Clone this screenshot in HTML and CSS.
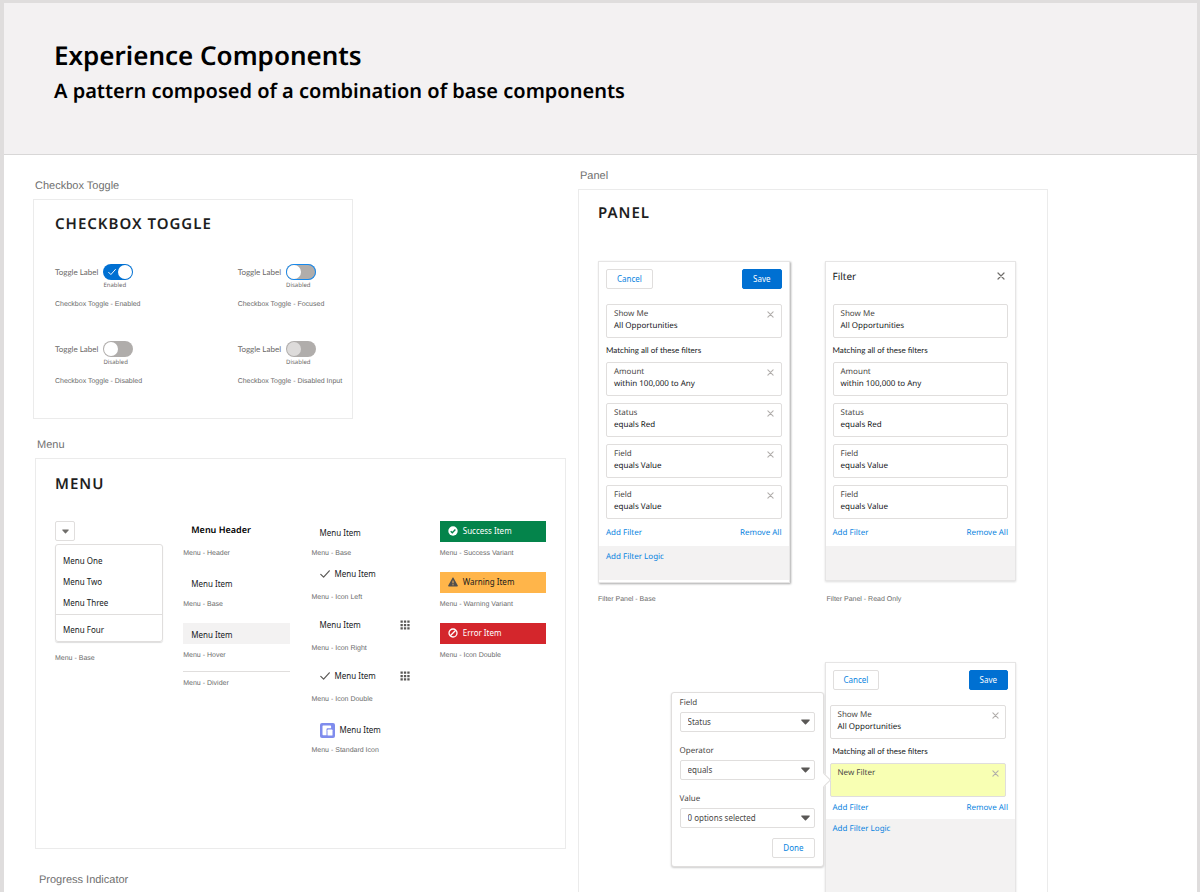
FILE: index.html
```html
<!DOCTYPE html>
<html lang="en">
<head>
<meta charset="utf-8">
<meta name="viewport" content="width=device-width, initial-scale=1">
<title>Experience Components</title>
<link rel="stylesheet" href="styles.css">
</head>
<body>
<svg class="sprite" aria-hidden="true">
  <symbol id="i-check" viewBox="0 0 10 10"><path d="M.8 5.4 3.6 8.2 9.3 1.8" fill="none" stroke="currentColor" stroke-width="1.2" stroke-linecap="round" stroke-linejoin="round"/></symbol>
  <symbol id="i-close" viewBox="0 0 8 8"><path d="M1 1 7 7M7 1 1 7" fill="none" stroke="currentColor" stroke-width="1.2" stroke-linecap="round"/></symbol>
  <symbol id="i-down" viewBox="0 0 10 6"><path d="M.9.3h8.2c.6 0 .8.5.5.9L5.6 5.5c-.3.4-.9.4-1.2 0L.4 1.2C.1.8.3.3.9.3z" fill="currentColor"/></symbol>
  <symbol id="i-apps" viewBox="0 0 10 10"><path d="M.5.5h2.300v2.300H.5zM3.900.5h2.300v2.300H3.900zM7.300.5h2.300v2.300H7.300zM.5 3.900h2.300v2.300H.5zM3.900 3.900h2.300v2.300H3.900zM7.300 3.900h2.300v2.300H7.300zM.5 7.300h2.300v2.300H.5zM3.900 7.300h2.300v2.300H3.900zM7.300 7.300h2.300v2.300H7.300z" fill="currentColor"/></symbol>
</svg>
<div class="page">
  <header class="hero">
    <h1 class="hero-title">Experience Components</h1>
    <p class="hero-text">A pattern composed of a combination of base components</p>
  </header>
  <main class="board">
    <div class="column">
      <section class="section section-toggle">
        <p class="section-label">Checkbox Toggle</p>
        <div class="card">
          <h2 class="card-title">Checkbox Toggle</h2>
          <div class="toggles">
            <div>
              <label class="toggle"><span class="toggle-label">Toggle Label</span><span class="switch"><input class="switch-input" type="checkbox" checked><svg class="switch-check"><use href="#i-check"/></svg></span><span class="toggle-state">Enabled</span></label>
              <p class="caption">Checkbox Toggle - Enabled</p>
            </div>
            <div>
              <label class="toggle"><span class="toggle-label">Toggle Label</span><span class="switch"><input class="switch-input is-focused" type="checkbox"></span><span class="toggle-state">Disabled</span></label>
              <p class="caption">Checkbox Toggle - Focused</p>
            </div>
            <div>
              <label class="toggle"><span class="toggle-label">Toggle Label</span><span class="switch"><input class="switch-input" type="checkbox"></span><span class="toggle-state">Disabled</span></label>
              <p class="caption">Checkbox Toggle - Disabled</p>
            </div>
            <div>
              <label class="toggle"><span class="toggle-label">Toggle Label</span><span class="switch"><input class="switch-input" type="checkbox" disabled></span><span class="toggle-state">Disabled</span></label>
              <p class="caption">Checkbox Toggle - Disabled Input</p>
            </div>
          </div>
        </div>
      </section>

      <section class="section section-menu">
        <p class="section-label">Menu</p>
        <div class="card">
          <h2 class="card-title">Menu</h2>
          <div class="menus">
            <div>
              <button class="menu-trigger" type="button" aria-label="Open menu"><svg class="icon-down-small"><use href="#i-down"/></svg></button>
              <ul class="menu">
                <li><button class="menu-option" type="button">Menu One</button></li>
                <li><button class="menu-option" type="button">Menu Two</button></li>
                <li><button class="menu-option" type="button">Menu Three</button></li>
                <li class="menu-last"><button class="menu-option" type="button">Menu Four</button></li>
              </ul>
              <p class="caption">Menu - Base</p>
            </div>
            <div>
              <h3 class="item item-header">Menu Header</h3>
              <p class="caption">Menu - Header</p>
              <button class="item" type="button">Menu Item</button>
              <p class="caption">Menu - Base</p>
              <button class="item item-hover" type="button">Menu Item</button>
              <p class="caption caption-tight">Menu - Hover</p>
              <hr class="divider">
              <p class="caption">Menu - Divider</p>
            </div>
            <div>
              <button class="item" type="button">Menu Item</button>
              <p class="caption caption-tight">Menu - Base</p>
              <button class="item item-check" type="button"><svg class="icon"><use href="#i-check"/></svg>Menu Item</button>
              <p class="caption">Menu - Icon Left</p>
              <button class="item item-check" type="button">Menu Item<svg class="icon icon-end"><use href="#i-apps"/></svg></button>
              <p class="caption">Menu - Icon Right</p>
              <button class="item item-check" type="button"><svg class="icon"><use href="#i-check"/></svg>Menu Item<svg class="icon icon-end"><use href="#i-apps"/></svg></button>
              <p class="caption">Menu - Icon Double</p>
              <button class="item" type="button"><svg class="icon-standard" viewBox="0 0 15 15"><rect width="15" height="15" rx="2" fill="#7f8ced"/><path d="M3.200 2.600h7.200c.4 0 .7.300.7.700V5.200H7.700c-.7 0-1.200.5-1.200 1.200v5.900H3.200c-.4 0-.7-.3-.7-.7V3.300c0-.4.3-.7.7-.7z" fill="#fff"/><rect x="7.500" y="6.600" width="5" height="6" rx=".7" fill="#fff"/></svg>Menu Item</button>
              <p class="caption">Menu - Standard Icon</p>
            </div>
            <div>
              <button class="item item-solid item-success" type="button"><svg class="icon" viewBox="0 0 10 10"><circle cx="5" cy="5" r="4.700" fill="#fff"/><path d="M2.700 5.200 4.300 6.800 7.400 3.500" fill="none" stroke="#04844b" stroke-width="1.300"/></svg>Success Item</button>
              <p class="caption">Menu - Success Variant</p>
              <button class="item item-solid item-warning" type="button"><svg class="icon" viewBox="0 0 10 10"><path d="M5 .6c.3 0 .5.1.6.4l4.200 7.600c.2.4 0 .9-.5.9H.7c-.5 0-.7-.5-.5-.9L4.400 1c.1-.3.3-.4.6-.4z" fill="#514f4d"/><path d="M5 3.600v2.700M5 7.200v1.100" stroke="#ffb75d" stroke-width="1"/></svg>Warning Item</button>
              <p class="caption">Menu - Warning Variant</p>
              <button class="item item-solid item-error" type="button"><svg class="icon" viewBox="0 0 10 10"><g fill="none" stroke="#fff" stroke-width="1.300"><circle cx="5" cy="5" r="4"/><path d="M2.300 7.700 7.700 2.300"/></g></svg>Error Item</button>
              <p class="caption">Menu - Icon Double</p>
            </div>
          </div>
        </div>
      </section>

      <section class="section section-progress">
        <p class="section-label">Progress Indicator</p>
      </section>
    </div>

    <section class="section section-panel">
      <p class="section-label">Panel</p>
      <div class="card">
        <h2 class="card-title">Panel</h2>
        <div class="panels">
          <div class="panel panel-raised">
            <div class="panel-head"><button class="button" type="button">Cancel</button><button class="button button-brand" type="button">Save</button></div>
            <div class="filters">
              <div class="filter"><span class="filter-name">Show Me</span><span>All Opportunities</span><button class="remove" type="button" aria-label="Remove"><svg class="icon-close"><use href="#i-close"/></svg></button></div>
            </div>
            <p class="match">Matching all of these filters</p>
            <div class="filters">
              <div class="filter"><span class="filter-name">Amount</span><span>within 100,000 to Any</span><button class="remove" type="button" aria-label="Remove"><svg class="icon-close"><use href="#i-close"/></svg></button></div>
              <div class="filter"><span class="filter-name">Status</span><span>equals Red</span><button class="remove" type="button" aria-label="Remove"><svg class="icon-close"><use href="#i-close"/></svg></button></div>
              <div class="filter"><span class="filter-name">Field</span><span>equals Value</span><button class="remove" type="button" aria-label="Remove"><svg class="icon-close"><use href="#i-close"/></svg></button></div>
              <div class="filter"><span class="filter-name">Field</span><span>equals Value</span><button class="remove" type="button" aria-label="Remove"><svg class="icon-close"><use href="#i-close"/></svg></button></div>
            </div>
            <div class="links"><a class="link" href="#add">Add Filter</a><a class="link" href="#remove">Remove All</a></div>
            <div class="panel-foot"><a class="link" href="#logic">Add Filter Logic</a></div>
          </div>

          <div class="panel">
            <div class="panel-head"><h3 class="panel-title">Filter</h3><button class="panel-close" type="button" aria-label="Close"><svg class="icon-close"><use href="#i-close"/></svg></button></div>
            <div class="filters">
              <div class="filter"><span class="filter-name">Show Me</span><span>All Opportunities</span></div>
            </div>
            <p class="match">Matching all of these filters</p>
            <div class="filters">
              <div class="filter"><span class="filter-name">Amount</span><span>within 100,000 to Any</span></div>
              <div class="filter"><span class="filter-name">Status</span><span>equals Red</span></div>
              <div class="filter"><span class="filter-name">Field</span><span>equals Value</span></div>
              <div class="filter"><span class="filter-name">Field</span><span>equals Value</span></div>
            </div>
            <div class="links"><a class="link" href="#add">Add Filter</a><a class="link" href="#remove">Remove All</a></div>
            <div class="panel-foot"></div>
          </div>

          <p class="caption">Filter Panel - Base</p>
          <p class="caption caption-inset">Filter Panel - Read Only</p>

          <div class="panel panel-editing">
            <div class="panel-head"><button class="button" type="button">Cancel</button><button class="button button-brand" type="button">Save</button></div>
            <div class="filters">
              <div class="filter"><span class="filter-name">Show Me</span><span>All Opportunities</span><button class="remove" type="button" aria-label="Remove"><svg class="icon-close"><use href="#i-close"/></svg></button></div>
            </div>
            <p class="match">Matching all of these filters</p>
            <div class="filters">
              <div class="filter filter-new"><span class="filter-name">New Filter</span><button class="remove" type="button" aria-label="Remove"><svg class="icon-close"><use href="#i-close"/></svg></button></div>
            </div>
            <div class="links"><a class="link" href="#add">Add Filter</a><a class="link" href="#remove">Remove All</a></div>
            <div class="panel-foot"><a class="link" href="#logic">Add Filter Logic</a></div>
            <form class="popover">
              <label class="field" for="f-field">Field<span class="select"><select id="f-field" class="select-input"><option>Status</option></select><svg class="select-icon"><use href="#i-down"/></svg></span></label>
              <label class="field" for="f-operator">Operator<span class="select"><select id="f-operator" class="select-input"><option>equals</option></select><svg class="select-icon"><use href="#i-down"/></svg></span></label>
              <label class="field" for="f-value">Value<span class="select"><select id="f-value" class="select-input"><option>0 options selected</option></select><svg class="select-icon"><use href="#i-down"/></svg></span></label>
              <button class="button popover-done" type="button">Done</button>
            </form>
          </div>
        </div>
      </div>
    </section>
  </main>
</div>
</body>
</html>
```
FILE: styles.css
```css
:root {
  --sans: "Noto Sans", "Open Sans", sans-serif;
  --compact: Lato, "Noto Sans", sans-serif;
  --caption: "Liberation Sans", Arial, sans-serif;
  --line: #e0dedd;
  --frame: #ebebeb;
  --blue: #0070d2;
  --link: #0a84e0;
}

*, *::before, *::after { box-sizing: border-box; }
body, h1, h2, h3, p, ul { margin: 0; padding: 0; }
ul { list-style: none; }
button, select, input { margin: 0; font: inherit; color: inherit; }
svg { display: block; flex: none; }
.sprite { position: absolute; width: 0; height: 0; }

body {
  font: 8px/12px var(--sans);
  color: #16181b;
  background: #fff;
  text-rendering: geometricPrecision;
}

.page {
  height: 100vh;
  overflow: hidden;
  border: solid #dfdddd;
  border-width: 3px 3px 0 4px;
}

.hero {
  padding: 33px 50px 49px;
  background: #f3f1f2;
  border-bottom: 1px solid #d8d7d7;
  color: #000;
}
.hero-title { font-size: 26px; line-height: 38px; font-weight: 600; }
.hero-text { margin-top: 2px; font-size: 20px; line-height: 29px; font-weight: 600; }

.board {
  display: grid;
  grid-template-columns: 533fr 470fr;
  column-gap: 12px;
  padding: 0 149px 0 29px;
}

.section-label {
  margin-bottom: 6px;
  padding-left: 2px;
  font: 11px/14px var(--caption);
  color: #6f6f6f;
}
.card { border: 1px solid var(--frame); }
.card-title {
  font-size: 15px;
  line-height: 20px;
  font-weight: 600;
  letter-spacing: 1px;
  text-transform: uppercase;
  color: #1e1e1e;
}
.caption { font: 7px/10px var(--caption); color: #6c6c6c; }

/* Checkbox toggle */
.section-toggle { width: 60%; padding-top: 24px; }
.section-toggle .card { padding: 14px 0 31px 21px; }
.toggles {
  display: grid;
  grid-template-columns: 8fr 5fr;
  row-gap: 31px;
  margin-top: 30px;
}
.toggle {
  display: grid;
  grid-template-columns: max-content 1fr;
  column-gap: 5px;
  align-items: center;
  margin-bottom: 10px;
  color: #6b6967;
}
.toggle-label { font-family: var(--compact); }
.switch { display: grid; align-items: center; justify-content: start; }
.switch > * { grid-area: 1 / 1; }
.switch-input {
  appearance: none;
  display: block;
  width: 30px;
  height: 16px;
  padding: 1px;
  border-radius: 8px;
  background: #b0adab;
}
.switch-input::before {
  content: "";
  display: block;
  width: 14px;
  height: 14px;
  border-radius: 50%;
  background: #fff;
}
.switch-input:checked { background: var(--blue); }
.switch-input:checked::before { margin-left: auto; }
.switch-input:disabled::before { background: #dddbda; }
.is-focused { box-shadow: inset 0 0 0 1px #1589ee; }
.switch-check { width: 8px; height: 8px; margin-left: 5px; color: #fff; pointer-events: none; }
.toggle-state { grid-column: 2; font-size: 6px; line-height: 10px; }

/* Menu */
.section-menu { padding: 19px 0 0 2px; }
.section-menu .card { padding: 15px 19px 79px 19px; }
.menus {
  display: grid;
  grid-template-columns: repeat(4, 1fr);
  column-gap: 22px;
  margin-top: 27px;
}
.menu-trigger {
  display: grid;
  place-items: center;
  width: 20px;
  height: 20px;
  padding: 0;
  border: 1px solid var(--line);
  border-radius: 2px;
  background: #fff;
  color: #706e6b;
}
.icon-down-small { width: 7px; height: 5px; }
.menu {
  margin: 3px -2px 12px 0;
  padding: 5px 0 1px;
  border: 1px solid var(--line);
  border-radius: 3px;
  box-shadow: 0 1px 1px #0002;
}
.menu-option {
  display: block;
  width: 100%;
  height: 21px;
  padding: 0 7px;
  border: 0;
  background: none;
  text-align: left;
}
.menu-last { margin-top: 1px; padding-top: 4px; border-top: 1px solid var(--line); }

.item {
  display: flex;
  align-items: center;
  gap: 5px;
  width: 100%;
  height: 21px;
  margin-bottom: 7px;
  padding: 3px 8px 0;
  border: 0;
  background: none;
  text-align: left;
}
.item + .caption { margin-bottom: 13px; }
.item + .caption-tight { margin-bottom: 6px; }
.item-header { padding-top: 0; padding-bottom: 3px; font-size: 9px; font-weight: 600; color: #000; }
.item-hover { background: #f3f2f2; }
.item-check { padding-top: 0; padding-bottom: 3px; }
.item-solid { padding-top: 0; padding-bottom: 1px; }
.item-success { background: #04844b; color: #fff; }
.item-warning { background: #ffb54a; }
.item-error { background: #d4262c; color: #fff; }
.icon { width: 10px; height: 10px; color: #5a5856; }
.icon-end { margin-left: auto; }
.icon-standard { width: 15px; height: 15px; }
.divider { margin: 10px 0 7px; border: 0; border-top: 1px solid var(--line); }

.section-progress { padding: 24px 0 0 4px; }

/* Panel */
.section-panel { padding-top: 14px; }
.section-panel .card { padding: 13px 31px 0 19px; }
.panels {
  display: grid;
  grid-template-columns: 1fr 1fr;
  column-gap: 35px;
  align-items: start;
  margin-top: 38px;
}
.panel {
  position: relative;
  border: 1px solid #e6e5e5;
  box-shadow: 0 1px 2px #0002;
}
.panel-raised { padding-bottom: 2px; box-shadow: 1px 1px 2px #0005; }
.panel-head {
  display: flex;
  justify-content: space-between;
  align-items: start;
  height: 42px;
  padding: 7px 7px 0;
}
.panel-title { font-size: 10px; line-height: 14px; font-weight: 400; }
.panel-close, .remove {
  display: grid;
  place-items: center;
  width: 14px;
  height: 14px;
  padding: 0;
  border: 0;
  background: none;
  color: #706e6b;
}
.panel-close .icon-close { width: 8px; height: 8px; }
.icon-close { width: 7px; height: 7px; }
.button {
  height: 20px;
  padding: 0 10px;
  border: 1px solid var(--line);
  border-radius: 2px;
  background: #fff;
  color: var(--link);
}
.button-brand { border-color: var(--blue); background: var(--blue); color: #fff; }
.filters { display: grid; gap: 7px; padding: 0 7px; }
.filter {
  display: grid;
  grid-template-columns: 1fr 14px;
  grid-auto-rows: 12px;
  align-items: center;
  height: 34px;
  padding: 3px 3px 5px 7px;
  border: 1px solid var(--line);
  border-radius: 2px;
}
.filter > span { grid-column: 1; }
.filter-name { color: #4a4846; }
.filter .remove { grid-area: 1 / 2; color: #b0adab; }
.filter-new { background: #f8ffb3; }
.match { padding: 0 7px; font-family: var(--compact); line-height: 24px; }
.links { display: flex; justify-content: space-between; padding: 0 7px; line-height: 27px; }
.link { color: var(--link); text-decoration: none; }
.panel-foot { min-height: 34px; padding: 5px 7px; background: #f3f2f2; }
.panels > .caption { margin-top: 12px; }
.caption-inset { padding-left: 2px; }

.panel-editing { grid-column: 2; margin-top: 57px; }
.panel-editing .filters { padding: 0 9px 0 4px; }
.panel-editing .links { line-height: 22px; }
.panel-editing .panel-foot { min-height: 160px; padding-top: 4px; }

.popover {
  position: absolute;
  top: 29px;
  right: 100%;
  display: grid;
  gap: 14px;
  width: 153px;
  margin-right: 2px;
  padding: 5px 8px 8px;
  border: 1px solid var(--line);
  border-radius: 3px;
  background: #fff;
  box-shadow: 0 1px 2px #0003;
}
.popover::after {
  content: "";
  position: absolute;
  top: 82px;
  right: -6px;
  width: 10px;
  height: 10px;
  border: solid var(--line);
  border-width: 1px 1px 0 0;
  background: #fff;
  transform: rotate(45deg);
}
.field { display: grid; gap: 4px; line-height: 10px; color: #4a4846; }
.select { display: grid; align-items: center; }
.select > * { grid-area: 1 / 1; }
.select-input {
  appearance: none;
  width: 100%;
  height: 20px;
  padding: 0 7px;
  border: 1px solid var(--line);
  border-radius: 2px;
  background: #fff;
}
.select-icon { justify-self: end; width: 9px; height: 6px; margin-right: 5px; color: #5a5856; pointer-events: none; }
.popover-done { justify-self: end; margin-top: -4px; }
```
